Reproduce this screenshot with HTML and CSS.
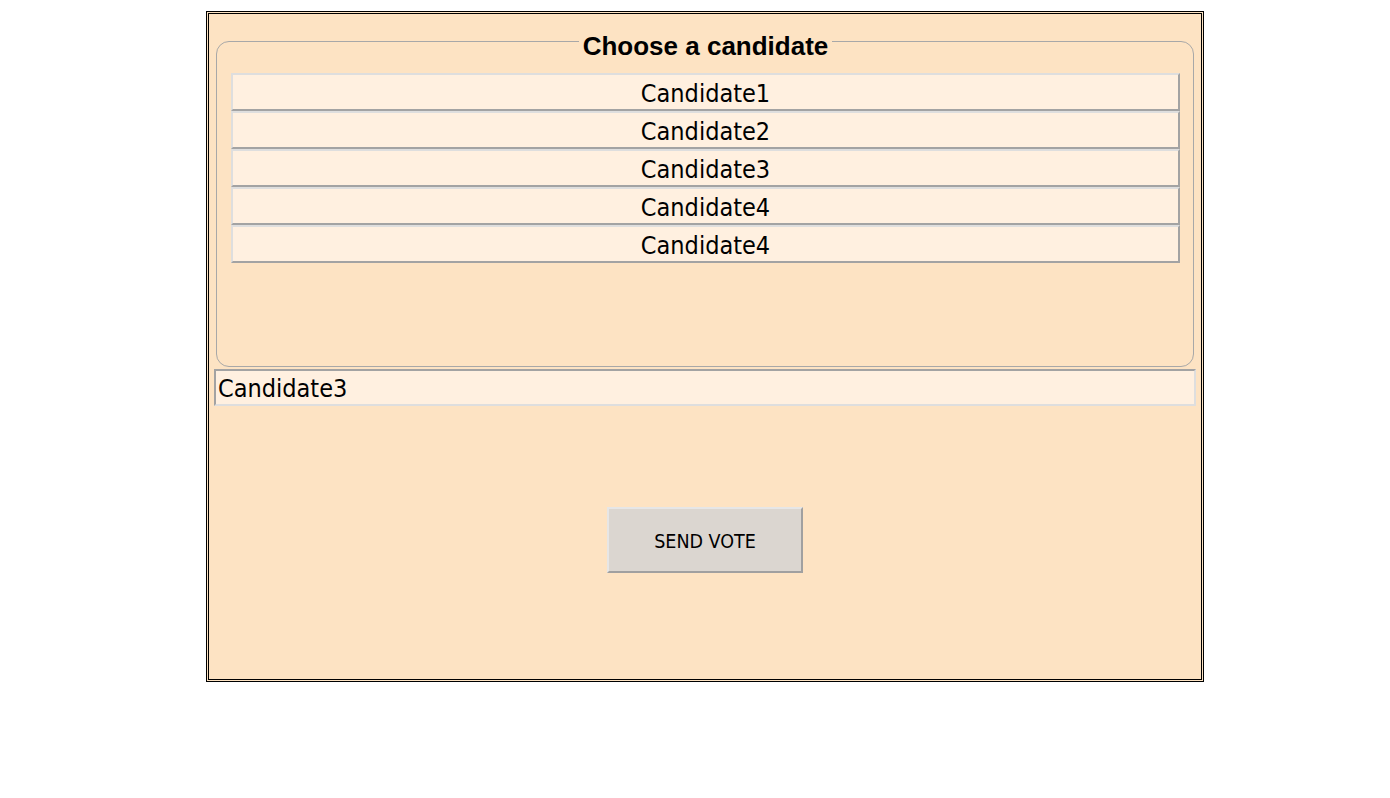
FILE: index.html
```html
<!DOCTYPE html>
<html>
<head>
<meta charset="utf-8">
<link rel="stylesheet" href="styles.css">
</head>
<body>
<div class="panel">
  <fieldset class="choices">
    <legend class="title">Choose a candidate</legend>
    <div class="list">
      <div class="item">Candidate1</div>
      <div class="item">Candidate2</div>
      <div class="item">Candidate3</div>
      <div class="item">Candidate4</div>
      <div class="item">Candidate4</div>
    </div>
  </fieldset>
  <div class="selected">Candidate3</div>
  <div class="actions">
    <button class="send">SEND VOTE</button>
  </div>
</div>
</body>
</html>
```
FILE: styles.css
```css
html, body {
  margin: 0;
  padding: 0;
  background: #ffffff;
}
body {
  padding: 11px 0 0 206px;
  font-family: "DejaVu Sans Condensed", "DejaVu Sans", Verdana, sans-serif;
}
.panel {
  box-sizing: border-box;
  width: 998px;
  height: 671px;
  border: 3px double #000000;
  background: #fde3c3;
  padding: 0 5px;
  display: flex;
  flex-direction: column;
}
.choices {
  box-sizing: border-box;
  margin: 8px 2px 0 2px;
  height: 345px;
  border: 1px solid #a8a8a8;
  border-radius: 13px;
  padding: 0 13px 0 14px;
}
.title {
  margin: 0 auto;
  padding: 9px 4px 0 4px;
  font-family: "Liberation Sans", Arial, sans-serif;
  font-weight: bold;
  font-size: 26px;
  line-height: 30px;
  color: #000;
}
.list {
  margin-top: 12px;
  display: flex;
  flex-direction: column;
}
.item {
  box-sizing: border-box;
  height: 38px;
  border: 2px solid;
  border-color: #dedede #a3a3a3 #a3a3a3 #dedede;
  background: #fff0e0;
  padding-top: 4px;
  text-align: center;
  font-size: 25px;
  line-height: 30px;
  color: #000;
}
.selected {
  box-sizing: border-box;
  margin-top: 2px;
  height: 37px;
  border: 2px solid;
  border-color: #a3a3a3 #dedede #dedede #a3a3a3;
  background: #fff0e0;
  padding: 2px 2px 0 2px;
  font-size: 25px;
  line-height: 31px;
  color: #000;
}
.actions {
  display: flex;
  justify-content: center;
  margin-top: 101px;
}
.send {
  box-sizing: border-box;
  width: 196px;
  height: 66px;
  border: 2px solid;
  border-color: #e6e6e6 #a0a0a0 #a0a0a0 #e6e6e6;
  background: #dbd6d0;
  font-family: "DejaVu Sans Condensed", "DejaVu Sans", Verdana, sans-serif;
  font-size: 19.5px;
  color: #000;
  padding: 2px 0 0 0;
}
```
